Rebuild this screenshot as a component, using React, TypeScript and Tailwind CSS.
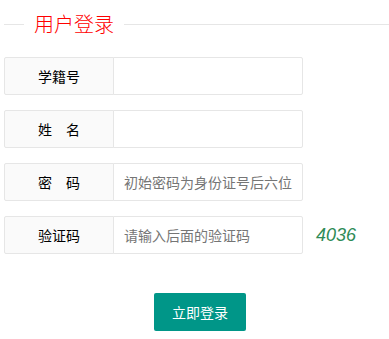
import React from "react";

const rows: { label: string; placeholder: string; code?: string }[] = [
  { label: "学籍号", placeholder: "" },
  { label: "姓　名", placeholder: "" },
  { label: "密　码", placeholder: "初始密码为身份证号后六位" },
  { label: "验证码", placeholder: "请输入后面的验证码", code: "4036" },
];

export default function App() {
  return (
    <div
      className="w-[389px] h-[339px] bg-white pl-[4px]"
      style={{ fontFamily: '"Noto Sans CJK SC", "Noto Sans", sans-serif' }}
    >
      <div className="flex items-center h-[48px]">
        <div className="w-[20px] h-px bg-[#e6e6e6]" />
        <div className="px-[10px] text-[20px] font-light text-[#ff0000] leading-[24px]">
          用户登录
        </div>
        <div className="flex-1 h-px bg-[#e6e6e6]" />
      </div>
      <div className="mt-[9px] flex flex-col gap-[15px]">
        {rows.map((r) => (
          <div key={r.label} className="flex items-center">
            <div className="w-[110px] h-[38px] box-border border border-[#e6e6e6] bg-[#fafafa] rounded-l-[2px] flex items-center justify-center text-[14px] text-[#000] whitespace-pre">
              {r.label}
            </div>
            <input
              className="-ml-px w-[190px] h-[38px] box-border border border-[#e6e6e6] bg-white rounded-r-[2px] pl-[10px] text-[14px] text-[#333] placeholder:text-[#757575] outline-none"
              placeholder={r.placeholder}
              style={{ fontFamily: '"Noto Sans CJK SC", "Noto Sans", sans-serif' }}
            />
            {r.code && (
              <span
                className="ml-[13px] text-[18px] italic text-[#2e8b57]"
                style={{ fontFamily: '"Liberation Sans", Arial, sans-serif' }}
              >
                {r.code}
              </span>
            )}
          </div>
        ))}
      </div>
      <div className="mt-[39px] pl-[150px]">
        <button
          className="h-[38px] px-[18px] bg-[#009688] text-white text-[14px] rounded-[2px]"
          style={{ fontFamily: '"Noto Sans CJK SC", "Noto Sans", sans-serif' }}
        >
          立即登录
        </button>
      </div>
    </div>
  );
}
